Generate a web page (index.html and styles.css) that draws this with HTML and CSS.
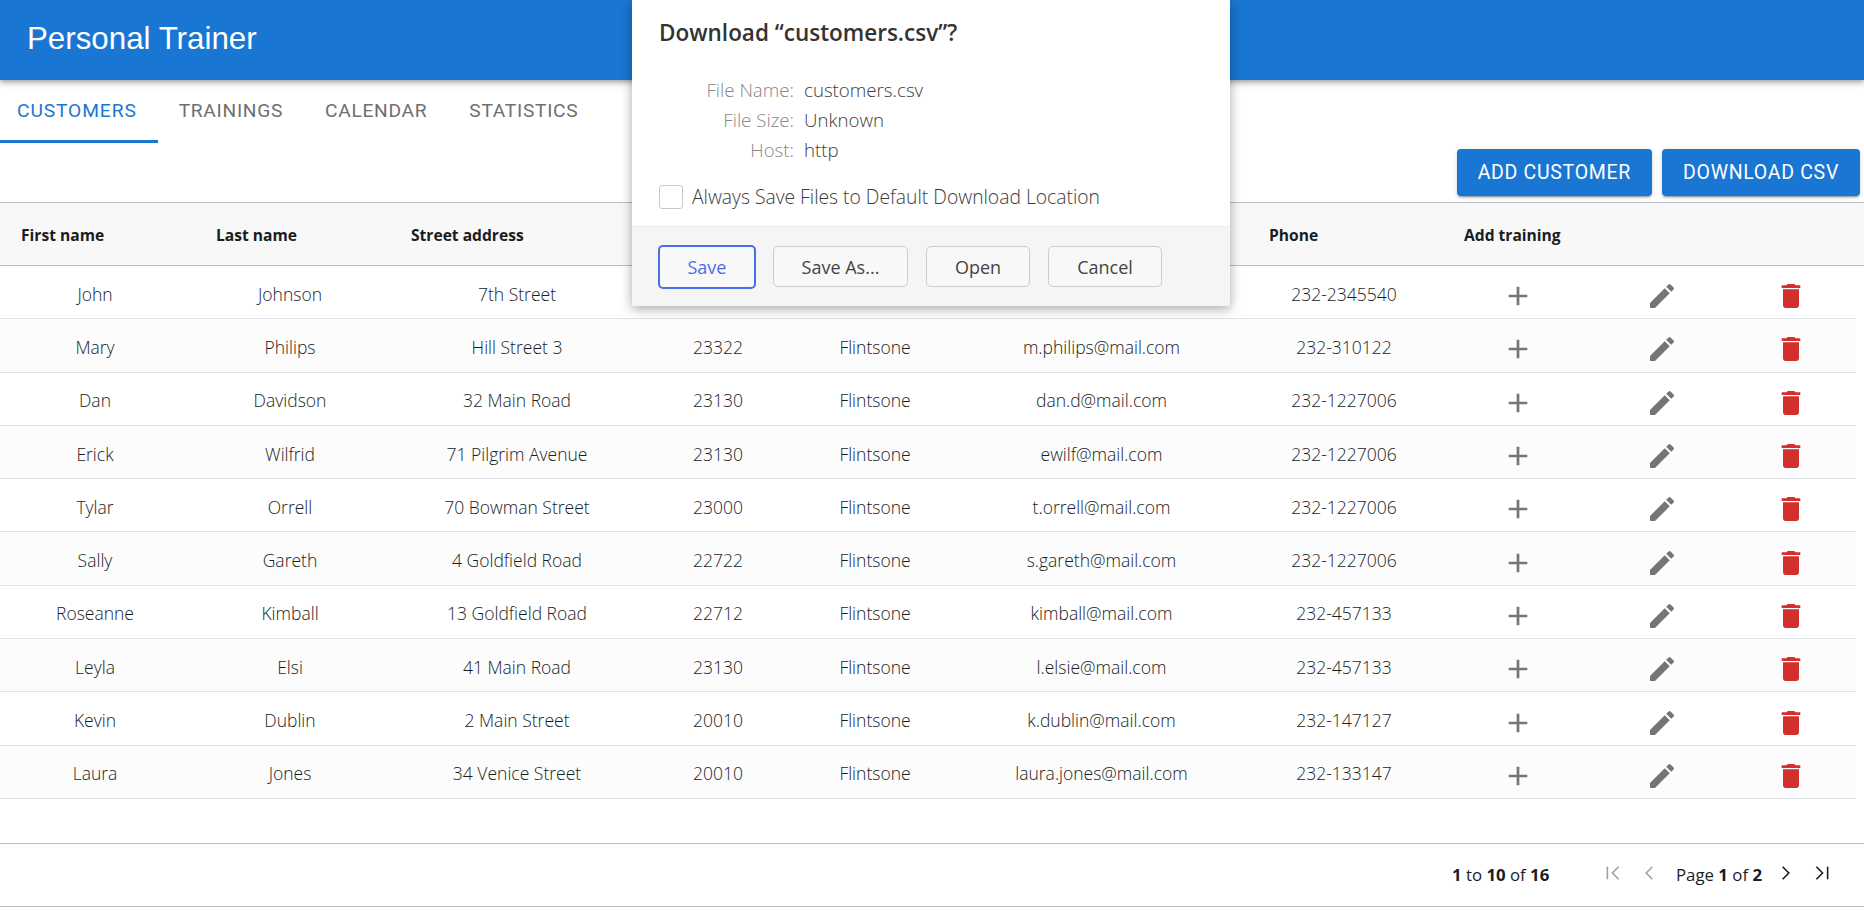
FILE: index.html
```html
<!DOCTYPE html>
<html lang="en">

<head>
    <meta charset="UTF-8">
    <title>Personal Trainer</title>
    <link rel="stylesheet" href="styles.css">
</head>

<body>
    <header class="appbar">
        <h1>Personal Trainer</h1>
    </header>

    <nav class="tabs">
        <a class="tab tab-first active">Customers</a>
        <a class="tab">Trainings</a>
        <a class="tab">Calendar</a>
        <a class="tab">Statistics</a>
    </nav>

    <div class="actions">
        <button class="btn">Add customer</button>
        <button class="btn">Download CSV</button>
    </div>

    <div class="grid">
        <div class="row head">
            <span>First name</span>
            <span>Last name</span>
            <span>Street address</span>
            <span>Postcode</span>
            <span>City</span>
            <span>Email</span>
            <span>Phone</span>
            <span>Add training</span>
            <span></span>
            <span></span>
        </div>
        <div id="rows"></div>
        <div class="pager">
            <span class="count"><b>1</b> to <b>10</b> of <b>16</b></span>
            <svg class="pg off" viewBox="0 0 16 16"><path d="M3 2.500v11M13 2.500 7.500 8l5.500 5.500" /></svg>
            <svg class="pg off pg-prev" viewBox="0 0 16 16"><path d="M11 2.500 5.500 8l5.500 5.500" /></svg>
            <span class="page">Page <b>1</b> of <b>2</b></span>
            <svg class="pg" viewBox="0 0 16 16"><path d="M5 2.500 10.500 8 5 13.500" /></svg>
            <svg class="pg pg-last" viewBox="0 0 16 16"><path d="M13 2.500v11M3 2.500 8.500 8 3 13.500" /></svg>
        </div>
    </div>

    <div class="dialog">
        <h2>Download “customers.csv”?</h2>
        <dl class="info">
            <dt>File Name:</dt>
            <dd>customers.csv</dd>
            <dt>File Size:</dt>
            <dd>Unknown</dd>
            <dt>Host:</dt>
            <dd>http</dd>
        </dl>
        <label class="always"><span class="check"></span>Always Save Files to Default Download Location</label>
        <div class="dialog-foot">
            <button class="dbtn save">Save</button>
            <button class="dbtn save-as">Save As...</button>
            <button class="dbtn open">Open</button>
            <button class="dbtn cancel">Cancel</button>
        </div>
    </div>

    <script>
        const customers = [
            ["John", "Johnson", "7th Street", "23110", "Flintsone", "john@mail.com", "232-2345540"],
            ["Mary", "Philips", "Hill Street 3", "23322", "Flintsone", "m.philips@mail.com", "232-310122"],
            ["Dan", "Davidson", "32 Main Road", "23130", "Flintsone", "dan.d@mail.com", "232-1227006"],
            ["Erick", "Wilfrid", "71 Pilgrim Avenue", "23130", "Flintsone", "ewilf@mail.com", "232-1227006"],
            ["Tylar", "Orrell", "70 Bowman Street", "23000", "Flintsone", "t.orrell@mail.com", "232-1227006"],
            ["Sally", "Gareth", "4 Goldfield Road", "22722", "Flintsone", "s.gareth@mail.com", "232-1227006"],
            ["Roseanne", "Kimball", "13 Goldfield Road", "22712", "Flintsone", "kimball@mail.com", "232-457133"],
            ["Leyla", "Elsi", "41 Main Road", "23130", "Flintsone", "l.elsie@mail.com", "232-457133"],
            ["Kevin", "Dublin", "2 Main Street", "20010", "Flintsone", "k.dublin@mail.com", "232-147127"],
            ["Laura", "Jones", "34 Venice Street", "20010", "Flintsone", "laura.jones@mail.com", "232-133147"],
        ];

        const icons = {
            add: "M19 13h-6v6h-2v-6H5v-2h6V5h2v6h6v2z",
            edit: "M3 17.25V21h3.75L17.81 9.94l-3.75-3.75L3 17.25zM20.71 7.04c.39-.39.39-1.02 0-1.41l-2.34-2.34a.9959.9959 0 0 0-1.41 0l-1.83 1.83 3.75 3.75 1.83-1.83z",
            del: "M6 19c0 1.1.9 2 2 2h8c1.1 0 2-.9 2-2V7H6v12zM19 4h-3.5l-1-1h-5l-1 1H5v2h14V4z",
        };

        function icon(name) {
            return `<span class="cell-icon ${name}"><svg viewBox="0 0 24 24"><path d="${icons[name]}"/></svg></span>`;
        }

        document.getElementById("rows").innerHTML = customers.map(c => `
            <div class="row body">
                ${c.map(v => `<span>${v}</span>`).join("")}
                ${icon("add")}${icon("edit")}${icon("del")}
            </div>`).join("");
    </script>
</body>

</html>
```

FILE: styles.css
```css
* {
    box-sizing: border-box;
}

html,
body {
    height: 100%;
}

body {
    margin: 0;
    overflow: hidden;
    background-color: white;
    color: #181d1f;
    font-family: 'Open Sans', sans-serif;
}

.appbar {
    display: flex;
    align-items: center;
    height: 80px;
    padding: 0 0 2px 27px;
    background-color: #1976d2;
    color: white;
    box-shadow: 0 2px 4px -1px rgba(0, 0, 0, 0.2), 0 4px 5px rgba(0, 0, 0, 0.14), 0 1px 10px rgba(0, 0, 0, 0.12);
    position: relative;
}

h1 {
    margin: 0;
    font-family: 'Liberation Sans', sans-serif;
    font-size: 31.3px;
    font-weight: 400;
}

/* Tabs */
.tabs {
    display: flex;
    height: 63px;
    font-family: Roboto, sans-serif;
}

.tab {
    display: flex;
    align-items: center;
    height: 63px;
    padding: 0 21px;
    border-bottom: 3px solid transparent;
    color: #6f6f6f;
    font-size: 19.2px;
    letter-spacing: 0.7px;
    text-transform: uppercase;
}

.tab-first {
    padding-left: 17px;
    letter-spacing: 0.9px;
}

.active {
    color: #1976d2;
    border-bottom-color: #1976d2;
}

/* Buttons above the grid */
.actions {
    display: flex;
    justify-content: flex-end;
    gap: 10px;
    height: 59px;
    padding: 6px 4px 0 0;
}

.btn {
    height: 47px;
    padding: 0 21px;
    border: none;
    border-radius: 4px;
    background-color: #1976d2;
    color: white;
    font-family: Roboto, sans-serif;
    font-size: 19.5px;
    font-weight: 400;
    letter-spacing: 0.7px;
    text-transform: uppercase;
    box-shadow: 0 3px 1px -2px rgba(0, 0, 0, 0.2), 0 2px 2px rgba(0, 0, 0, 0.14), 0 1px 5px rgba(0, 0, 0, 0.12);
}

/* Grid */
.grid {
    font-size: 17.5px;
}

.row {
    display: grid;
    grid-template-columns: 195px 195px 254px 148px 166px 290px 195px 150px 138px 125px;
    align-items: center;
}

.head {
    height: 64px;
    padding-top: 1px;
    border-top: 1px solid #babfc7;
    border-bottom: 1px solid #babfc7;
    background-color: #f8f8f8;
    font-size: 15.6px;
    font-weight: 700;
}

.head span {
    padding-left: 21px;
}

.body {
    width: 1856px;
    height: 53.3px;
    border-bottom: 1px solid #dde2eb;
    text-align: center;
    font-weight: 300;
}

.body:nth-child(even) {
    background-color: #fcfcfc;
}

.body>span {
    padding-top: 3px;
}

.body>span:nth-child(1),
.body>span:nth-child(2),
.body>span:nth-child(10) {
    padding-right: 5px;
}

.body>span:nth-child(6),
.body>span:nth-child(7) {
    padding-right: 3px;
}

.cell-icon {
    display: flex;
    justify-content: center;
    padding-top: 8px !important;
}

.cell-icon svg {
    width: 32px;
    height: 32px;
    fill: #757575;
}

.cell-icon.del svg {
    fill: #d32f2f;
}

/* Pagination */
.pager {
    display: flex;
    align-items: center;
    height: 64px;
    margin-top: 44px;
    border-top: 1px solid #babfc7;
    border-bottom: 1px solid #babfc7;
    padding-left: 1452px;
    font-size: 16.8px;
}

.count {
    width: 152px;
}

.page {
    width: 83px;
    margin: 0 18px 0 18px;
    white-space: nowrap;
}

.pg {
    width: 18px;
    height: 18px;
    fill: none;
    stroke: #181d1f;
    stroke-width: 1.4;
    margin-top: -4px;
}

.pg.off {
    stroke: #9aa0a6;
}

.pg-prev {
    margin-left: 18px;
}

.pg-last {
    margin-left: 18px;
}

/* Browser download dialog */
.dialog {
    position: absolute;
    top: 0;
    left: 632px;
    width: 598px;
    height: 306px;
    background-color: white;
    border-radius: 0 0 3px 3px;
    box-shadow: 0 3px 12px rgba(0, 0, 0, 0.35);
    color: #3c3c3c;
    font-size: 18.7px;
}

h2 {
    margin: 0;
    padding: 18px 0 0 27px;
    font-size: 22.5px;
    font-weight: 600;
    line-height: 29px;
    color: #333;
}

.info {
    display: grid;
    grid-template-columns: 162px auto;
    grid-auto-rows: 30px;
    column-gap: 10px;
    align-items: center;
    margin: 27px 0 0;
    font-weight: 300;
}

.info dt {
    text-align: right;
    color: #888;
}

.info dd {
    margin: 0;
}

.always {
    display: flex;
    align-items: center;
    gap: 9px;
    margin: 19px 0 0 27px;
    font-size: 19.3px;
    font-weight: 300;
    white-space: nowrap;
}

.check {
    width: 24px;
    height: 24px;
    border: 1px solid #c8c8c8;
    border-radius: 3px;
}

.dialog-foot {
    position: absolute;
    left: 0;
    right: 0;
    bottom: 0;
    display: flex;
    align-items: center;
    height: 80px;
    padding: 0 0 0 26px;
    border-top: 1px solid #ececec;
    background-color: #f5f5f5;
    border-radius: 0 0 3px 3px;
}

.dbtn {
    height: 41px;
    border: 1px solid #ccc;
    border-radius: 5px;
    background-color: #f8f8f8;
    color: #444;
    font-family: 'Open Sans', sans-serif;
    font-size: 18px;
}

.save {
    width: 98px;
    height: 44px;
    border: 2px solid #4a6ee8;
    color: #4a6ee8;
}

.save-as {
    width: 135px;
    margin-left: 17px;
}

.open {
    width: 104px;
    margin-left: 18px;
}

.cancel {
    width: 114px;
    margin-left: 18px;
}
```
